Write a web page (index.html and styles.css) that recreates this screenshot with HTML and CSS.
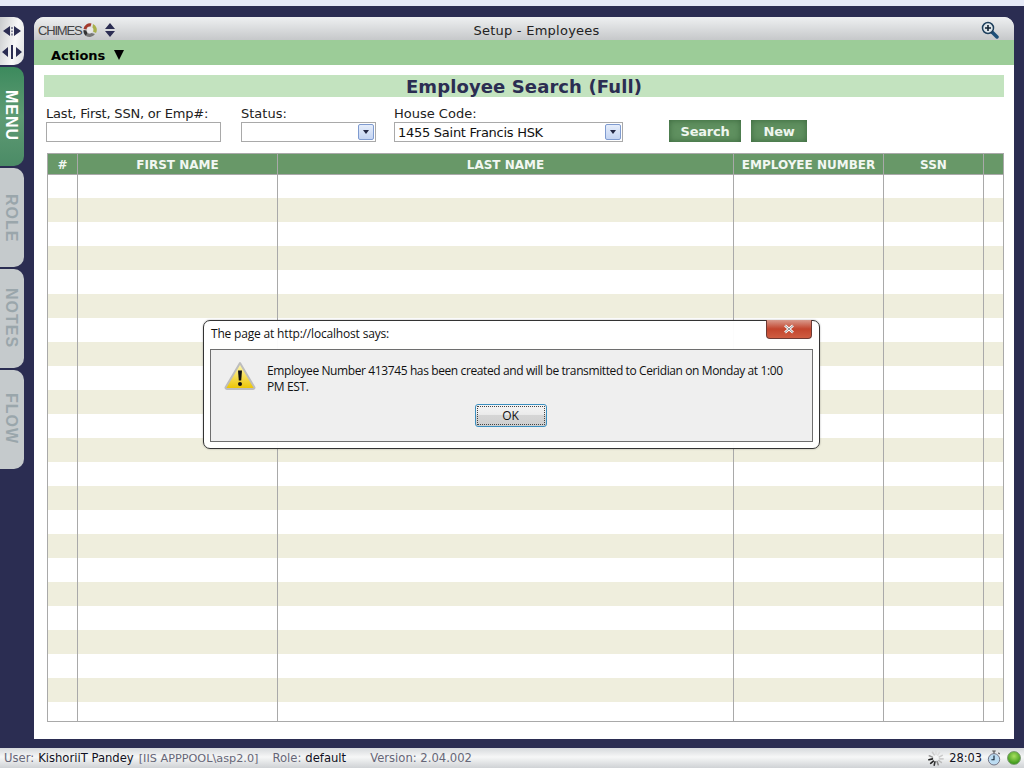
FILE: index.html
```html
<!DOCTYPE html>
<html lang="en">
<head>
  <meta charset="UTF-8" />
  <title>Setup - Employees</title>
  <link rel="stylesheet" href="styles.css">
</head>
<body>

<div class="top-strip"></div>

<div class="main">
  <div class="rail">
    <div class="rail-arrows">
      <svg width="22" height="16" viewBox="0 0 22 16"><path d="M2 8l7-5v10zM20 8l-7-5v10z" fill="#2b2d52"/><path d="M11 4v2M11 7.500v1.500M11 10.500v2" stroke="#2b2d52"/></svg>
      <svg width="22" height="16" viewBox="0 0 22 16"><path d="M1 8l6-5v10zM21 8l-6-5v10z" fill="#2b2d52"/><path d="M11 1v14" stroke="#2b2d52" stroke-width="2"/></svg>
    </div>
    <div class="tab tab-active tab-menu"><span>MENU</span></div>
    <div class="tab tab-role"><span>ROLE</span></div>
    <div class="tab tab-notes"><span>NOTES</span></div>
    <div class="tab tab-flow"><span>FLOW</span></div>
  </div>

  <div class="panel">
    <div class="panel-head">
      <div class="brand">
        <span class="brand-name">CHIMES</span>
        <svg class="brand-logo" width="16" height="16" viewBox="0 0 16 16">
          <circle cx="8" cy="8" r="3" fill="#e8e8e8"/>
          <path d="M1.500 7a6.500 6.500 0 0 1 8-5.500l-1 3a3.500 3.500 0 0 0-4 3z" fill="#a33a2c"/>
          <path d="M11 2a6.500 6.500 0 0 1 3 9l-3-1.500a3.500 3.500 0 0 0-.5-4z" fill="#a9b04a"/>
          <path d="M13 12a6.500 6.500 0 0 1-9 2l1.500-3a3.500 3.500 0 0 0 4 0z" fill="#777"/>
          <path d="M4 14a6.500 6.500 0 0 1-2.500-6l3 .5a3.500 3.500 0 0 0 1 2.500z" fill="#333"/>
        </svg>
        <svg class="brand-sort" width="12" height="16" viewBox="0 0 12 16"><path d="M6 1l5 6H1zM6 15l5-6H1z" fill="#2b2d52"/></svg>
      </div>
      <div class="panel-title">Setup - Employees</div>
      <svg class="zoom-icon" width="18" height="18" viewBox="0 0 18 18">
        <path d="M11 11l5 5" stroke="#1d4f78" stroke-width="3.500" stroke-linecap="round"/>
        <circle cx="7" cy="7" r="5.500" fill="#dfe6ea" stroke="#1d3f5c" stroke-width="1.500"/>
        <path d="M4 7h6M7 4v6" stroke="#123" stroke-width="1.600"/>
      </svg>
    </div>
    <div class="actions-bar"><span class="actions">Actions</span><span class="actions-caret"></span></div>

    <div class="content">
      <h1 class="page-title">Employee Search (Full)</h1>

      <div class="search-row">
        <div class="field field-name">
          <label>Last, First, SSN, or Emp#:</label>
          <div class="input"></div>
        </div>
        <div class="field field-status">
          <label>Status:</label>
          <div class="input"><span class="drop-btn"></span></div>
        </div>
        <div class="field field-house">
          <label>House Code:</label>
          <div class="input">1455 Saint Francis HSK<span class="drop-btn"></span></div>
        </div>
        <button class="btn btn-search">Search</button>
        <button class="btn btn-new">New</button>
      </div>

      <div class="grid">
        <div class="grid-head">
          <div class="col-num">#</div>
          <div class="col-first">FIRST NAME</div>
          <div class="col-last">LAST NAME</div>
          <div class="col-emp">EMPLOYEE NUMBER</div>
          <div class="col-ssn">SSN</div>
          <div class="col-end"></div>
        </div>
        <div class="grid-body" id="grid-body"></div>
      </div>
    </div>
  </div>
</div>

<div class="status-bar">
  <span class="st-label st-user">User:</span>
  <span class="st-value">KishoriiT Pandey</span>
  <span class="st-pool">[IIS APPPOOL\asp2.0]</span>
  <span class="st-label st-role">Role:</span>
  <span class="st-value">default</span>
  <span class="st-label st-version">Version: 2.04.002</span>
  <div class="st-right">
    <svg width="16" height="16" viewBox="0 0 18 18" class="spinner">
      <g stroke-width="1.800" stroke-linecap="round">
        <path d="M9 1v4" stroke="#ddd"/><path d="M13 2.500l-2 3.200" stroke="#ddd"/><path d="M16 6l-3.400 1.800" stroke="#ccc"/><path d="M17 10h-4" stroke="#ccc"/>
        <path d="M15 14l-3-2" stroke="#bbb"/><path d="M11.500 16.500l-1.300-3.500" stroke="#888"/><path d="M7 17l.8-3.700" stroke="#333"/><path d="M3 15l3-2.500" stroke="#222"/>
        <path d="M1 11l4-1" stroke="#222"/><path d="M1.500 6.500l3.500 1.500" stroke="#999"/><path d="M5 2.500l2 3" stroke="#ccc"/>
      </g>
    </svg>
    <span class="st-time">28:03</span>
    <svg width="14" height="16" viewBox="0 0 16 18" class="clock">
      <path d="M6 1h4M8 1v3M13 3l1.500 1.500" stroke="#555" stroke-width="1.400"/>
      <circle cx="8" cy="10.500" r="6.500" fill="#bcdcf2" stroke="#667"/>
      <path d="M8 6v5h-3" fill="none" stroke="#123" stroke-width="1.300"/>
    </svg>
    <span class="st-led"></span>
  </div>
</div>

<div class="dialog">
  <div class="dialog-title">The page at http://localhost says:</div>
  <span class="dialog-close">
    <svg width="14" height="10" viewBox="0 0 14 10"><path d="M3 1.500l8 7M11 1.500l-8 7" stroke="#fff" stroke-width="2.600"/><path d="M3 1.500l8 7M11 1.500l-8 7" stroke="#8d9094" stroke-width="1"/></svg>
  </span>
  <div class="dialog-body">
    <div class="dialog-msg">
      <svg class="warn-icon" width="32" height="30" viewBox="0 0 32 30">
        <defs>
          <linearGradient id="warn" x1="0" y1="0" x2="0" y2="1">
            <stop offset="0" stop-color="#fff9b8"/>
            <stop offset="1" stop-color="#ecc400"/>
          </linearGradient>
        </defs>
        <path d="M16 2L30.500 26.500a1.500 1.500 0 0 1-1.500 1.500H3a1.500 1.500 0 0 1-1.500-1.500z" fill="url(#warn)" stroke="#bdbdbd" stroke-width="2" stroke-linejoin="round"/>
        <path d="M14 9.500h4l-.8 10h-2.400z" fill="#111"/>
        <circle cx="16" cy="23" r="2" fill="#111"/>
      </svg>
      <p>Employee Number 413745 has been created and will be transmitted to Ceridian on Monday at 1:00 PM EST.</p>
    </div>
    <div class="dialog-actions"><button class="ok-btn"><span>OK</span></button></div>
  </div>
</div>

<script>
  const gridBody = document.getElementById('grid-body');
  for (let i = 0; i < 23; i++) {
    const row = document.createElement('div');
    row.className = i % 2 ? 'grid-row alt' : 'grid-row';
    row.innerHTML = '<div class="col-num"></div><div class="col-first"></div><div class="col-last"></div><div class="col-emp"></div><div class="col-ssn"></div><div class="col-end"></div>';
    gridBody.appendChild(row);
  }
</script>

</body>
</html>
```

FILE: styles.css
```css
html, body {
  margin: 0;
  height: 768px;
  overflow: hidden;
}
body {
  position: relative;
  display: flex;
  flex-direction: column;
  background: #2b2d52;
  font-family: "DejaVu Sans", Verdana, sans-serif;
  font-size: 12px;
  color: #111;
}
.top-strip {
  height: 6px;
  background: #e6eaf7;
}
.main {
  flex: 1;
  display: flex;
  min-height: 0;
  padding-top: 11px;
}

/* left rail */
.rail {
  width: 24px;
  margin-right: 10px;
  display: flex;
  flex-direction: column;
}
.rail-arrows {
  height: 48px;
  box-sizing: border-box;
  padding-top: 6px;
  background: linear-gradient(100deg, #c9cbcd, #f8f8f8 60%, #dcdee0);
  border-radius: 0 10px 10px 0;
  display: flex;
  flex-direction: column;
  align-items: center;
  gap: 5px;
  margin-bottom: 2px;
  line-height: 0;
}
.tab {
  box-sizing: border-box;
  background: #c5cacc;
  border-radius: 0 10px 10px 0;
  display: flex;
  justify-content: center;
  font-family: "Liberation Sans", Arial, sans-serif;
  font-weight: bold;
  font-size: 16px;
  color: #9aa6ab;
  padding-right: 2px;
}
.tab span {
  writing-mode: vertical-rl;
  letter-spacing: 1px;
}
.tab-active {
  background: linear-gradient(180deg, #3c8a5d, #5f9b74 50%, #4b8b66);
  color: #fff;
}
.tab-menu { height: 99px; padding-top: 23px; margin-bottom: 2px; }
.tab-role { height: 99px; padding-top: 26px; margin-bottom: 2px; }
.tab-notes { height: 99px; padding-top: 19px; margin-bottom: 2px; }
.tab-flow { height: 99px; padding-top: 23px; }

/* panel */
.panel {
  width: 980px;
  height: 722px;
  background: #fff;
  display: flex;
  flex-direction: column;
  border-radius: 10px 10px 0 0;
  overflow: hidden;
}
.panel-head {
  height: 23px;
  box-sizing: border-box;
  padding: 3px 0 0 25px;
  position: relative;
  display: flex;
  align-items: center;
  justify-content: center;
  background: linear-gradient(180deg, #eef0f1, #c6c8ca);
}
.brand {
  position: absolute;
  left: 4px;
  top: 5px;
  display: flex;
  align-items: center;
}
.brand-name {
  font-family: "Liberation Sans", Arial, sans-serif;
  font-size: 13px;
  letter-spacing: -1.2px;
  color: #444;
}
.brand-logo { margin-left: 1px; }
.brand-sort { margin-left: 6px; }
.panel-title {
  font-size: 13px;
  color: #222;
  letter-spacing: 0.25px;
  white-space: pre;
}
.zoom-icon {
  position: absolute;
  right: 15px;
  top: 4px;
}
.actions-bar {
  height: 25px;
  box-sizing: border-box;
  background: #9ccc98;
  display: flex;
  align-items: center;
  padding: 5px 0 0 17px;
}
.actions {
  font-size: 13px;
  font-weight: bold;
  color: #000;
}
.actions-caret {
  margin-left: 9px;
  border-left: 5px solid transparent;
  border-right: 5px solid transparent;
  border-top: 10px solid #000;
}
.content {
  flex: 1;
  padding: 10px 10px 0;
}
.page-title {
  margin: 0;
  height: 22px;
  line-height: 23px;
  background: #c3e3bf;
  text-align: center;
  font-size: 18px;
  font-weight: bold;
  color: #2b2d52;
  letter-spacing: 0.1px;
}

/* search form */
.search-row {
  display: flex;
  align-items: flex-end;
  height: 45px;
  padding-left: 2px;
}
.field label {
  display: block;
  font-size: 13px;
  line-height: 15px;
  color: #222;
  padding-bottom: 1px;
  margin-bottom: 0;
}
.field-name label { letter-spacing: -0.2px; }
.input {
  position: relative;
  box-sizing: border-box;
  height: 20px;
  border: 1px solid #a9a9a9;
  background: #fff;
  font-size: 13px;
  letter-spacing: -0.27px;
  line-height: 19px;
  padding-left: 3px;
  color: #111;
}
.field-name { width: 175px; margin-right: 20px; }
.field-status { width: 135px; margin-right: 18px; }
.field-house { width: 229px; margin-right: 46px; }
.drop-btn {
  position: absolute;
  right: 1px;
  top: 1px;
  width: 16px;
  height: 16px;
  border: 1px solid #7f9bd0;
  box-sizing: border-box;
  background: linear-gradient(180deg, #e5edfb, #c4d4f2);
  border-radius: 2px;
}
.drop-btn::after {
  content: "";
  position: absolute;
  left: 4px;
  top: 5px;
  border-left: 3px solid transparent;
  border-right: 3px solid transparent;
  border-top: 4px solid #222744;
}
.btn {
  height: 22px;
  padding: 0;
  border: none;
  background: #5f905f;
  box-shadow: inset 0 0 6px #3a663d;
  color: #eef6ee;
  font-family: inherit;
  font-size: 13px;
  letter-spacing: -0.25px;
  font-weight: bold;
  margin-bottom: 0;
}
.btn-search { width: 72px; margin-right: 10px; }
.btn-new { width: 56px; }

/* grid */
.grid {
  margin: 11px 0 0 3px;
  width: 957px;
  box-sizing: border-box;
  border: 1px solid #a9a9a9;
}
.grid-head, .grid-row {
  display: grid;
  grid-template-columns: 30px 200px 456px 150px 100px 19px;
}
.grid-head {
  height: 20px;
  background: #689868;
  border-bottom: 1px solid #a9a9a9;
  color: #f2f7f2;
  font-size: 12px;
  font-weight: bold;
  line-height: 22px;
  text-align: center;
}
.grid-head div, .grid-row div {
  box-sizing: border-box;
  border-right: 1px solid #a9a9a9;
}
.grid-head .col-end, .grid-row .col-end { border-right: none; }
.grid-body {
  height: 546px;
  overflow: hidden;
}
.grid-row { height: 24px; }
.grid-row:first-child { height: 23px; }
.grid-row.alt { background: #efeedd; }

/* status bar */
.status-bar {
  height: 20px;
  position: relative;
  display: flex;
  align-items: center;
  padding-left: 4px;
  background: linear-gradient(180deg, #d6d9dc, #f6f7f7 45%, #cfd2d5);
  font-size: 11.600px;
  color: #111;
  white-space: nowrap;
  margin-top: 9px;
}
.st-label { color: #667; }
.st-value { margin-left: 4px; color: #112; }
.st-pool { margin-left: 5px; font-size: 11.250px; color: #667; }
.st-role { margin-left: 14px; }
.st-version { margin-left: 24px; }
.st-right {
  position: absolute;
  right: 3px;
  top: 2px;
  display: flex;
  align-items: center;
}
.spinner { margin-right: 5px; }
.st-time { margin-right: 5px; font-size: 11.400px; color: #112; }
.clock { margin-right: 6px; }
.st-led {
  width: 14px;
  height: 14px;
  box-sizing: border-box;
  border-radius: 50%;
  background: radial-gradient(circle at 50% 35%, #a8e060, #3f9a1c 75%);
  border: 1px solid #7a9a70;
}

/* alert dialog, sits over the grid */
.dialog {
  position: absolute;
  left: 203px;
  top: 320px;
  width: 617px;
  height: 129px;
  box-sizing: border-box;
  padding: 28px 6px 6px;
  border: 1px solid #333;
  border-radius: 7px;
  background: rgba(255, 255, 255, 0.96);
  font-family: "Open Sans", "Noto Sans", sans-serif;
  font-size: 12px;
  color: #111;
  box-shadow: 0 0 2px #0005;
}
.dialog-title {
  position: absolute;
  left: 7px;
  top: 5px;
  line-height: 16px;
  letter-spacing: -0.18px;
}
.dialog-close {
  position: absolute;
  right: 7px;
  top: -1px;
  width: 46px;
  height: 19px;
  box-sizing: border-box;
  display: flex;
  align-items: center;
  justify-content: center;
  background: linear-gradient(180deg, #d99a8c, #c2452d 50%, #cf5d42);
  border: 1px solid #6d3a34;
  border-top: none;
  border-radius: 0 0 4px 4px;
}
.dialog-body {
  height: 93px;
  box-sizing: border-box;
  border: 1px solid #6e6e6e;
  background: #efefef;
  padding: 12px 14px 0 13px;
}
.dialog-msg {
  display: flex;
  height: 42px;
}
.warn-icon { flex: none; margin: -1px 11px 0 0; }
.dialog-msg p {
  margin: 0;
  padding-top: 1px;
  width: 530px;
  line-height: 16px;
  letter-spacing: -0.39px;
}
.dialog-actions {
  display: flex;
  justify-content: center;
  padding-right: 1px;
}
.ok-btn {
  width: 72px;
  height: 23px;
  padding: 0;
  border: 1px solid #3c8fbf;
  border-radius: 3px;
  background: linear-gradient(180deg, #f4f4f4 0, #ebebeb 45%, #d5d5d5 50%, #cfcfcf);
  font: inherit;
  color: #111;
}
.ok-btn span {
  display: block;
  margin: 1px;
  line-height: 17px;
  border: 1px dotted #444;
}
```
